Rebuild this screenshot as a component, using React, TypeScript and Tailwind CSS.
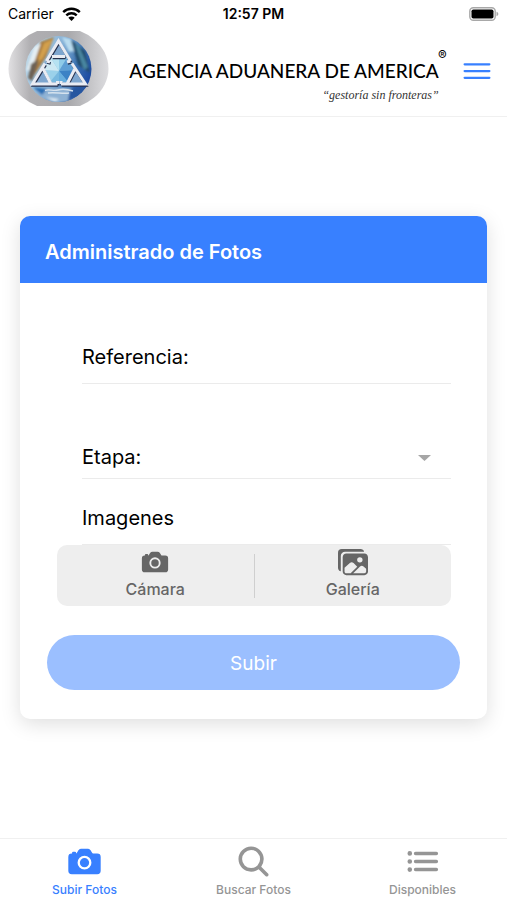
import { useState } from 'react'
import type { ReactNode } from 'react'
import clsx from 'clsx'
import { IoCamera, IoImages, IoList, IoMenuOutline, IoSearch } from 'react-icons/io5'

const TABS = [
  { id: 'subir', label: 'Subir Fotos', Icon: IoCamera },
  { id: 'buscar', label: 'Buscar Fotos', Icon: IoSearch },
  { id: 'disponibles', label: 'Disponibles', Icon: IoList },
]

function StatusBar() {
  return (
    <div className="grid h-7 grid-cols-3 items-center px-2 text-sm text-black">
      <div className="flex items-center gap-2">
        <span>Carrier</span>
        <svg aria-hidden="true" width="19" height="14" viewBox="0 0 19 14">
          <g fill="none" stroke="#000" strokeWidth="2.4">
            <path d="M1.2 5.2a11.8 11.8 0 0 1 16.6 0" />
            <path d="M4.3 8.4a7.4 7.4 0 0 1 10.4 0" />
          </g>
          <path d="M9.5 14 6.3 10.7a4.6 4.6 0 0 1 6.4 0z" />
        </svg>
      </div>
      <span className="text-center font-semibold">12:57 PM</span>
      <svg aria-hidden="true" className="justify-self-end" width="30" height="14" viewBox="0 0 30 14">
        <rect x="0.8" y="0.8" width="25.4" height="12.4" rx="3.5" fill="#fff" stroke="#a8a8a8" strokeWidth="1.4" />
        <rect x="2.5" y="2.5" width="22" height="9" rx="1.8" />
        <path d="M27.5 4.8c1.2.4 1.8 1.2 1.8 2.2s-.6 1.8-1.8 2.2z" fill="#a8a8a8" />
      </svg>
    </div>
  )
}

function Emblem() {
  return (
    <svg role="img" aria-label="Agencia Aduanera de America" className="shrink-0" width="101" height="75" viewBox="0 0 101 75">
      <defs>
        <linearGradient id="plate">
          <stop offset="0" stopColor="#e2e1e3" />
          <stop offset="0.22" stopColor="#b0afb2" />
          <stop offset="0.6" stopColor="#a9a9ac" />
          <stop offset="1" stopColor="#dddde0" />
        </linearGradient>
        <linearGradient id="globe" x1="0" y1="0.2" x2="1" y2="0.6">
          <stop offset="0" stopColor="#c9dfeb" />
          <stop offset="0.45" stopColor="#84b0d6" />
          <stop offset="0.75" stopColor="#3a70b0" />
          <stop offset="1" stopColor="#1845a0" />
        </linearGradient>
        <filter id="soft">
          <feGaussianBlur stdDeviation="1.3" />
        </filter>
        <clipPath id="plateClip">
          <ellipse cx="50.5" cy="37.5" rx="50" ry="41.5" />
        </clipPath>
        <clipPath id="globeClip">
          <circle cx="50.5" cy="38" r="33" />
        </clipPath>
      </defs>
      <rect width="101" height="75" fill="url(#plate)" clipPath="url(#plateClip)" />
      <g clipPath="url(#globeClip)">
        <rect x="17" y="4" width="68" height="68" fill="url(#globe)" />
        <g filter="url(#soft)">
          <path d="M32 11 46 6 38 26 25 46 20 34z" fill="#a77a3d" />
          <path d="M36 12 45 8 35 27 28 34z" fill="#d3a04d" />
          <path d="M26 16 33 12 24 38 18 40z" fill="#e4eef3" />
          <path d="M23 33 31 28 24 50 20 47z" fill="#6d6254" />
          <path d="M54 6 63 8 68 20 61 21z" fill="#b9dcef" />
          <path d="M63 9 77 20 82 42 70 34z" fill="#244d6e" />
          <path d="M67 13 71 15 80 36 76 39z" fill="#4a87a1" />
          <path d="M28 57 72 57 65 69 47 73 32 66z" fill="#8fb2d4" />
          <path d="M25 56 39 58 34 64z" fill="#2b6fb5" />
          <path d="M62 58 80 53 72 66 60 70z" fill="#2857a0" />
          <path d="M38 66 51 68 47 71z" fill="#dce9f2" />
        </g>
      </g>
      {/* Triangle face behind the three corners */}
      <path d="M50.5 9 78 53H24z" fill="#7ea6cf" />
      {/* Faceted crystal */}
      <path d="M43 27H59L67 39 60 51H42L34 39z" fill="#79b9df" />
      <path d="M51 40 43 27H51z" fill="#b6e2f1" />
      <path d="M51 40V27H59z" fill="#8fcbe8" />
      <path d="M51 40 59 27 67 39z" fill="#5f9fd4" />
      <path d="M51 40 67 39 60 51z" fill="#3c82c5" />
      <path d="M51 40 60 51H51z" fill="#67aedd" />
      <path d="M51 40 42 51 34 39z" fill="#9bd1ea" />
      <path d="M51 40 34 39 43 27z" fill="#cde9f3" />
      {/* Bevelled corners, dark edge first */}
      <g fill="none" transform="translate(0.7 1.5)" stroke="#26314e" strokeWidth="2.6">
        <path d="M38.5 30 50.5 10 62.5 30M44 25.5H57M38.5 30 42 31M62.5 30 59 31" />
        <path d="M37 32.5 24.5 53H49.5M35 37.5 43 53M49.5 53V50" />
        <path d="M64 32.5 77.5 53H53M67 37.5 59 53M53 53V50" />
      </g>
      <g fill="none" stroke="#e9ecf3" strokeWidth="3">
        <path d="M38.5 30 50.5 10 62.5 30M44 25.5H57M38.5 30 42 31M62.5 30 59 31" />
        <path d="M37 32.5 24.5 53H49.5M35 37.5 43 53M49.5 53V50" />
        <path d="M64 32.5 77.5 53H53M67 37.5 59 53M53 53V50" />
      </g>
      <path d="M37 59.5c4-2 8 1 13-.5s10-.5 15 1M40 62c7-1 15 1 21 0" fill="none" stroke="#d5e2ee" strokeWidth="1.4" />
    </svg>
  )
}

function Header() {
  return (
    <header className="flex h-[89px] items-start justify-between border-b border-[#f0f0f0] pt-[3px] pr-3 pl-2">
      <Emblem />
      <div className="relative pt-[26px] text-right whitespace-nowrap text-black">
        <h1 className="font-['Lato',sans-serif] text-[19px] leading-7 font-medium">AGENCIA ADUANERA DE AMERICA</h1>
        <p className="font-['Liberation_Serif',serif] text-xs leading-5 text-[#333] italic">“gestoría sin fronteras”</p>
        <span className="absolute top-4 -right-2 text-[13px] leading-4">®</span>
      </div>
      <button aria-label="Menú" className="mt-[22px] text-[#3880ff]">
        <IoMenuOutline size={36} />
      </button>
    </header>
  )
}

function FormRow({ children, className }: { children: ReactNode; className: string }) {
  return (
    <div className={clsx('mr-9 ml-[62px] flex items-center border-b border-[#ebebeb] text-xl text-black', className)}>
      {children}
    </div>
  )
}

function UploadCard() {
  const [reference, setReference] = useState('')
  const [stage, setStage] = useState('')

  return (
    <section className="overflow-hidden rounded-[10px] bg-white shadow-[0_5px_20px_rgba(0,0,0,0.13)]">
      <h2 className="flex h-[67px] items-center bg-[#3880ff] px-[25px] pt-1 text-xl font-semibold text-white">
        Administrado de Fotos
      </h2>

      <form onSubmit={(e) => e.preventDefault()} className="pb-[29px]">
        <FormRow className="mt-[47px] h-[54px]">
          <label htmlFor="reference">Referencia:</label>
          <input
            id="reference"
            value={reference}
            onChange={(e) => setReference(e.target.value)}
            className="ml-2 min-w-0 flex-1 bg-transparent outline-none"
          />
        </FormRow>

        <FormRow className="mt-[51px] h-11">
          <label htmlFor="stage">Etapa:</label>
          <div className="relative ml-2 flex-1">
            <select
              id="stage"
              value={stage}
              onChange={(e) => setStage(e.target.value)}
              className="block w-full appearance-none bg-transparent outline-none"
            >
              <option value="" />
            </select>
            <svg
              aria-hidden="true"
              className="pointer-events-none absolute top-3 right-5"
              width="13"
              height="6"
              viewBox="0 0 13 6"
            >
              <path d="M0 0H13L6.5 6z" fill="#a6a6a6" />
            </svg>
          </div>
        </FormRow>

        <FormRow className="mt-3 h-[54px]">
          <span>Imagenes</span>
        </FormRow>

        <div className="mr-9 ml-[37px] flex h-[61px] items-center rounded-[10px] bg-[#eeeeee] text-base font-medium text-[#666]">
          <button type="button" className="flex flex-1 flex-col items-center pb-1">
            <IoCamera size={30} />
            <span className="leading-6">Cámara</span>
          </button>
          <span className="h-11 w-px bg-[#cfcfcf]" />
          <button type="button" className="flex flex-1 flex-col items-center pb-1">
            <IoImages size={30} />
            <span className="leading-6">Galería</span>
          </button>
        </div>

        <div className="mt-[29px] px-[27px]">
          <button type="submit" disabled className="h-[55px] w-full rounded-full bg-[#9bbfff] pt-1 text-[19px] text-white">
            Subir
          </button>
        </div>
      </form>
    </section>
  )
}

function TabBar() {
  const [active, setActive] = useState('subir')

  return (
    <nav className="grid h-[62px] grid-cols-3 border-t border-[#f0f0f0]">
      {TABS.map(({ id, label, Icon }) => (
        <button
          key={id}
          onClick={() => setActive(id)}
          className={clsx(
            'flex flex-col items-center pt-1 text-xs font-medium',
            active === id ? 'text-[#3880ff]' : 'text-[#959595]',
          )}
        >
          <Icon size={37} />
          <span className="leading-5">{label}</span>
        </button>
      ))}
    </nav>
  )
}

export default function App() {
  return (
    <div className="flex min-h-screen flex-col bg-white font-['Inter',sans-serif]">
      <StatusBar />
      <Header />
      <main className="flex-1 px-5 pt-[99px] pb-10">
        <UploadCard />
      </main>
      <TabBar />
    </div>
  )
}
